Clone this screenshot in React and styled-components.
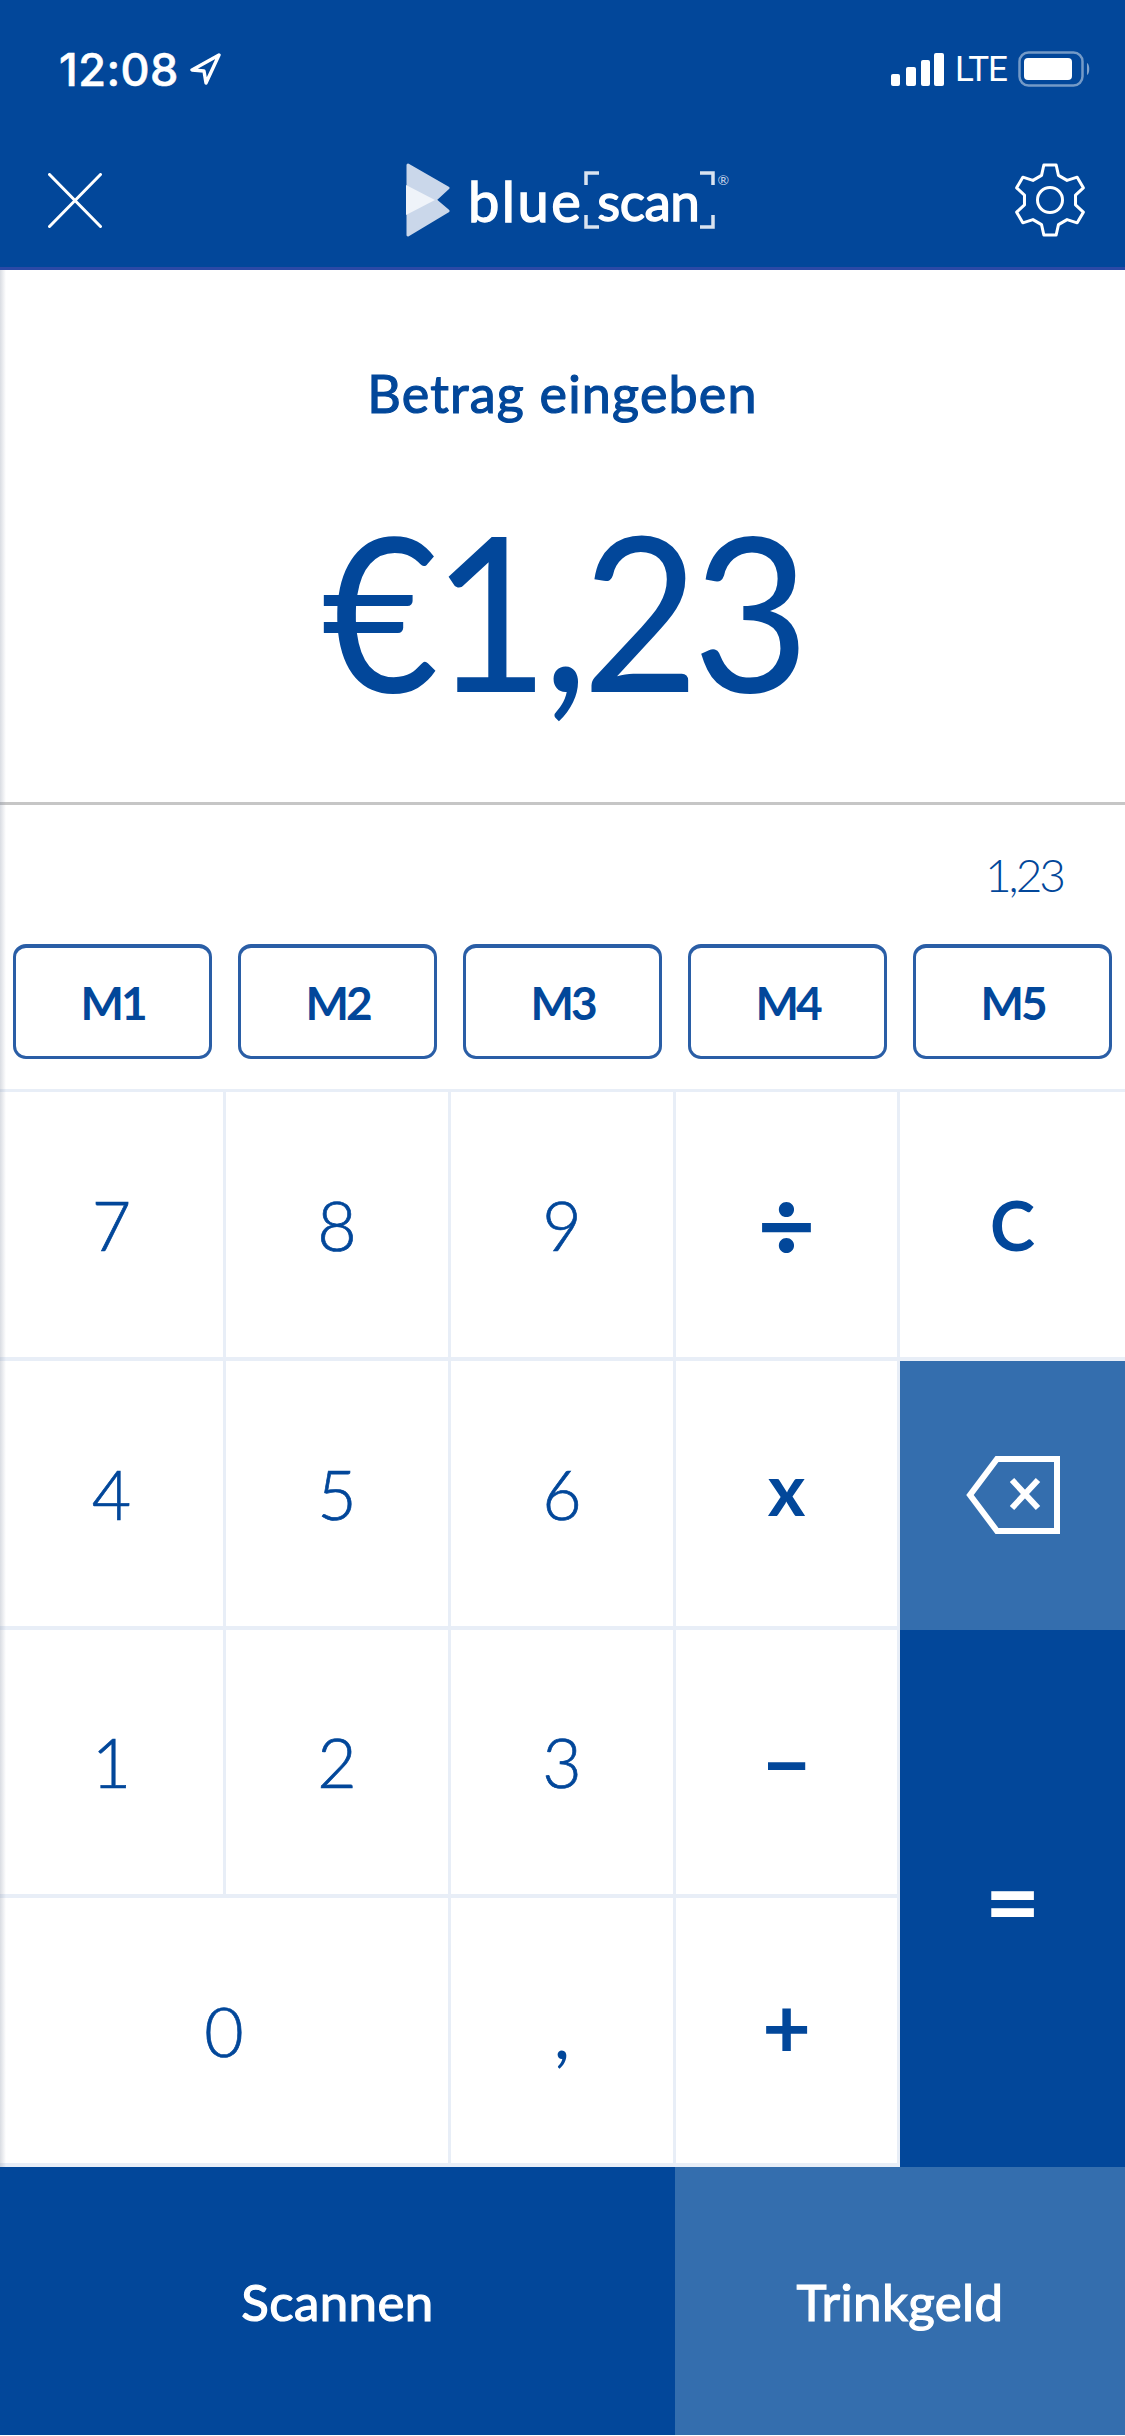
import React from "react";
import styled, { createGlobalStyle } from "styled-components";

const DARK = "#02479a";
const LIGHT = "#346eae";
const LINE = "#e8eef7";

// six flat teeth, drawn clockwise from the top one
const gearPath = () => {
  const point = (radius, degrees) => {
    const angle = ((degrees - 90) * Math.PI) / 180;
    return `${(38 + radius * Math.cos(angle)).toFixed(2)} ${(38 + radius * Math.sin(angle)).toFixed(2)}`;
  };
  const parts = [];
  for (let tooth = 0; tooth < 6; tooth++) {
    const mid = tooth * 60;
    parts.push(point(26, mid - 19), point(35.5, mid - 10), point(35.5, mid + 10), point(26, mid + 19));
  }
  return `M${parts.join(" L")} Z`;
};

const GlobalStyle = createGlobalStyle`
  html, body {
    margin: 0;
    padding: 0;
    background: #fff;
  }
  * {
    box-sizing: border-box;
  }
`;

const App = () => {
  return (
    <Page>
      <GlobalStyle />
      <TopBar>
        <StatusBar>
          <TimeGroup>
            <Time>12:08</Time>
            <svg width="32" height="32" viewBox="0 0 32 32" fill="none">
              <path
                d="M30 2 L3 17 L15 18 L17 30 Z"
                stroke="#fff"
                strokeWidth="3.4"
                strokeLinejoin="round"
              />
            </svg>
          </TimeGroup>
          <StatusGroup>
            <svg width="53" height="33" viewBox="0 0 53 33" fill="#fff">
              <rect x="0" y="21" width="9" height="12" rx="2" />
              <rect x="15" y="14" width="10" height="19" rx="2" />
              <rect x="30" y="7" width="9" height="26" rx="2" />
              <rect x="43" y="0" width="10" height="33" rx="2" />
            </svg>
            <Network>LTE</Network>
            <svg width="74" height="36" viewBox="0 0 74 36" fill="none">
              <rect
                x="1.5"
                y="1.5"
                width="63"
                height="33"
                rx="9"
                stroke="#fff"
                strokeOpacity="0.45"
                strokeWidth="2.5"
              />
              <rect x="6" y="7" width="48" height="22" rx="4" fill="#fff" />
              <path d="M69 12 C72 13 72 23 69 24 Z" fill="#fff" fillOpacity="0.5" />
            </svg>
          </StatusGroup>
        </StatusBar>
        <NavBar>
          <svg width="54" height="55" viewBox="0 0 54 55" fill="none">
            <path
              d="M1.5 1.5 L52.5 53.5 M52.5 1.5 L1.5 53.5"
              stroke="#fff"
              strokeWidth="3"
              strokeLinecap="round"
            />
          </svg>
          <Logo>
            <svg width="45" height="74" viewBox="0 0 45 74">
              <path
                d="M3 2 L43 25 L30 37 L43 48 L3 72 Z"
                fill="#cad7ea"
                stroke="#cad7ea"
                strokeWidth="3"
                strokeLinejoin="round"
              />
              <path d="M1 22 L30 37 L1 52 Z" fill="#eff3f9" />
            </svg>
            <Blue>blue</Blue>
            <svg width="16" height="58" viewBox="0 0 16 58" fill="none">
              <path d="M15 2 H2 V14 M2 44 V56 H15" stroke="#d9e3f0" strokeWidth="3.5" />
            </svg>
            <Scan>scan</Scan>
            <svg width="16" height="58" viewBox="0 0 16 58" fill="none">
              <path d="M1 2 H14 V14 M14 44 V56 H1" stroke="#d9e3f0" strokeWidth="3.5" />
            </svg>
            <Registered>®</Registered>
          </Logo>
          <svg width="76" height="76" viewBox="0 0 76 76" fill="none" stroke="#fff" strokeWidth="3" strokeLinejoin="round">
            <path d={gearPath()} />
            <circle cx="38" cy="38" r="12.5" />
          </svg>
        </NavBar>
      </TopBar>
      <Body>
        <AmountPanel>
          <Title>Betrag eingeben</Title>
          <Amount>€1,23</Amount>
        </AmountPanel>
        <Memo>1,23</Memo>
        <MemoryRow>
          {["M1", "M2", "M3", "M4", "M5"].map((label) => (
            <MemoryButton key={label}>{label}</MemoryButton>
          ))}
        </MemoryRow>
        <Keypad>
          <Key>7</Key>
          <Key>8</Key>
          <Key>9</Key>
          <Key $bold $size={100} $lift={4}>÷</Key>
          <Key $bold $size={68} $noRight>C</Key>
          <Key>4</Key>
          <Key>5</Key>
          <Key>6</Key>
          <Key $bold $lift={10}>x</Key>
          <Key $tone={LIGHT}>
            <svg width="94" height="78" viewBox="0 0 94 78" fill="none">
              <path
                d="M31 3 H91 V75 H31 L4 39 Z"
                stroke="#fff"
                strokeWidth="6"
                strokeLinejoin="miter"
              />
              <path
                d="M46 24 L72 52 M72 24 L46 52"
                stroke="#fff"
                strokeWidth="6"
              />
            </svg>
          </Key>
          <Key>1</Key>
          <Key>2</Key>
          <Key>3</Key>
          <Key $bold $size={84}>−</Key>
          <Key $bold $tone={DARK} $tall $size={96}>=</Key>
          <Key $wide>0</Key>
          <Key><Comma>,</Comma></Key>
          <Key $bold $size={84} $lift={10}>+</Key>
        </Keypad>
        <BottomBar>
          <BottomButton $tone={DARK} $grow={3}>Scannen</BottomButton>
          <BottomButton $tone={LIGHT} $grow={2}>Trinkgeld</BottomButton>
        </BottomBar>
      </Body>
    </Page>
  );
};

const Page = styled.div`
  width: 1125px;
  height: 2436px;
  overflow: hidden;
  background: #fff;
  color: ${DARK};
  font-family: Lato, "Open Sans", sans-serif;
`;

const TopBar = styled.header`
  height: 270px;
  display: flex;
  flex-direction: column;
  background: ${DARK};
  border-bottom: 3px solid #2b49a6;
`;

const StatusBar = styled.div`
  height: 138px;
  flex: none;
  display: flex;
  align-items: center;
  justify-content: space-between;
  padding: 0 33px 0 59px;
  color: #fff;
`;

const TimeGroup = styled.div`
  display: flex;
  align-items: center;
  gap: 10px;
`;

const Time = styled.span`
  font-family: Inter, sans-serif;
  font-size: 45px;
  font-weight: 500;
  letter-spacing: 0.5px;
  -webkit-text-stroke: 0.6px #fff;
`;

const StatusGroup = styled.div`
  display: flex;
  align-items: center;
  gap: 11px;
`;

const Network = styled.span`
  font-family: Roboto, sans-serif;
  font-size: 35px;
  font-weight: 400;
  letter-spacing: -1px;
`;

const NavBar = styled.nav`
  flex: 1;
  display: flex;
  align-items: center;
  justify-content: space-between;
  padding: 0 37px 5px 48px;
`;

const Logo = styled.div`
  display: flex;
  align-items: center;
  margin-left: 20px;
  color: #fff;
`;

const Blue = styled.span`
  margin: 0 1px 0 18px;
  font-size: 56px;
  font-weight: 400;
  letter-spacing: 2.5px;
  -webkit-text-stroke: 1.4px #fff;
`;

const Scan = styled(Blue)`
  margin: 0 0 0 -3px;
  font-size: 53px;
  letter-spacing: -0.5px;
`;

const Registered = styled.span`
  align-self: flex-start;
  margin: 8px 0 0 2px;
  font-size: 14px;
  color: #c7d4e8;
`;

const Body = styled.main`
  position: relative;

  &::after {
    content: "";
    position: absolute;
    inset: 0 auto 268px 0;
    width: 6px;
    background: linear-gradient(to right, rgba(130, 140, 160, 0.3), transparent);
    pointer-events: none;
  }
`;

const AmountPanel = styled.section`
  height: 535px;
  display: flex;
  flex-direction: column;
  align-items: center;
  padding-top: 92px;
  border-bottom: 3px solid #c6c6c6;
`;

const Title = styled.h1`
  margin: 0;
  font-size: 52px;
  line-height: 62px;
  font-weight: 400;
  letter-spacing: 1.2px;
  -webkit-text-stroke: 1.2px ${DARK};
`;

const Amount = styled.div`
  margin-top: 55px;
  font-size: 215px;
  line-height: 260px;
  font-weight: 400;
  letter-spacing: -7px;
  transform: scaleX(0.94);
`;

const Memo = styled.div`
  height: 139px;
  display: flex;
  align-items: center;
  justify-content: flex-end;
  padding: 0 62px 0 0;
  font-size: 46px;
  font-weight: 300;
  letter-spacing: -3px;
`;

const MemoryRow = styled.div`
  height: 145px;
  display: flex;
  gap: 26px;
  padding: 0 13px 30px;
`;

const MemoryButton = styled.button`
  flex: 1;
  padding: 0;
  background: #fff;
  color: ${DARK};
  border: 3px solid #2a5ea6;
  border-top-width: 4px;
  border-radius: 13px;
  font-family: inherit;
  font-size: 46px;
  font-weight: 700;
  letter-spacing: -3px;
`;

const Keypad = styled.div`
  height: 1078px;
  display: grid;
  grid-template-columns: 226px 225px 225px 224px 225px;
  grid-template-rows: repeat(4, 1fr);
  border-top: 3px solid ${LINE};
`;

const Key = styled.div`
  display: flex;
  align-items: center;
  justify-content: center;
  padding-bottom: ${(props) => props.$lift || 0}px;
  grid-column: ${(props) => (props.$wide ? "span 2" : "auto")};
  grid-row: ${(props) => (props.$tall ? "span 2" : "auto")};
  background: ${(props) => props.$tone || "#fff"};
  color: ${(props) => (props.$tone ? "#fff" : DARK)};
  font-size: ${(props) => props.$size || (props.$bold ? 72 : 68)}px;
  font-weight: ${(props) => (props.$bold ? 700 : 300)};
  -webkit-text-stroke: ${(props) => (props.$bold ? 0 : 0.7)}px;
  border-right: ${(props) => (props.$tone || props.$noRight ? "none" : `3px solid ${LINE}`)};
  border-bottom: ${(props) => (props.$tone ? "none" : `4px solid ${LINE}`)};
`;

const Comma = styled.span`
  font-weight: 400;
  font-size: 72px;
  -webkit-text-stroke: 0;
`;

const BottomBar = styled.div`
  height: 268px;
  display: flex;
`;

const BottomButton = styled.button`
  flex: ${(props) => props.$grow};
  padding: 0;
  border: none;
  background: ${(props) => props.$tone};
  color: #fff;
  font-family: inherit;
  font-size: 51px;
  font-weight: 400;
  letter-spacing: 0.4px;
  -webkit-text-stroke: 1.2px #fff;
`;

export default App;
